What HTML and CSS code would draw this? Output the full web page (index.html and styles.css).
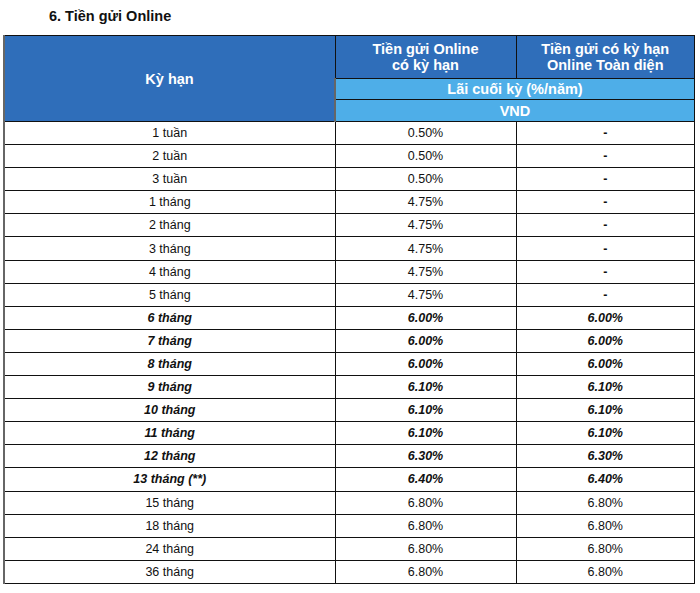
FILE: index.html
```html
<!DOCTYPE html>
<html lang="vi">
<head>
<meta charset="utf-8">
<title>Tiền gửi Online</title>
<link rel="stylesheet" href="styles.css">
</head>
<body>
<h2 class="title">6. Tiền gửi Online</h2>
<table class="rates">
  <colgroup>
    <col class="c1"><col class="c2"><col class="c3">
  </colgroup>
  <thead>
    <tr class="h1">
      <th rowspan="3" class="dark">Kỳ hạn</th>
      <th class="dark">Tiền gửi Online<br>có kỳ hạn</th>
      <th class="dark">Tiền gửi có kỳ hạn<br>Online Toàn diện</th>
    </tr>
    <tr class="h2"><th colspan="2" class="light">Lãi cuối kỳ (%/năm)</th></tr>
    <tr class="h3"><th colspan="2" class="light">VND</th></tr>
  </thead>
  <tbody>
    <tr><td>1 tuần</td><td>0.50%</td><td class="na">-</td></tr>
    <tr><td>2 tuần</td><td>0.50%</td><td class="na">-</td></tr>
    <tr><td>3 tuần</td><td>0.50%</td><td class="na">-</td></tr>
    <tr><td>1 tháng</td><td>4.75%</td><td class="na">-</td></tr>
    <tr><td>2 tháng</td><td>4.75%</td><td class="na">-</td></tr>
    <tr><td>3 tháng</td><td>4.75%</td><td class="na">-</td></tr>
    <tr><td>4 tháng</td><td>4.75%</td><td class="na">-</td></tr>
    <tr><td>5 tháng</td><td>4.75%</td><td class="na">-</td></tr>
    <tr class="em"><td>6 tháng</td><td>6.00%</td><td>6.00%</td></tr>
    <tr class="em"><td>7 tháng</td><td>6.00%</td><td>6.00%</td></tr>
    <tr class="em"><td>8 tháng</td><td>6.00%</td><td>6.00%</td></tr>
    <tr class="em"><td>9 tháng</td><td>6.10%</td><td>6.10%</td></tr>
    <tr class="em"><td>10 tháng</td><td>6.10%</td><td>6.10%</td></tr>
    <tr class="em"><td>11 tháng</td><td>6.10%</td><td>6.10%</td></tr>
    <tr class="em"><td>12 tháng</td><td>6.30%</td><td>6.30%</td></tr>
    <tr class="em"><td>13 tháng (**)</td><td>6.40%</td><td>6.40%</td></tr>
    <tr><td>15 tháng</td><td>6.80%</td><td>6.80%</td></tr>
    <tr><td>18 tháng</td><td>6.80%</td><td>6.80%</td></tr>
    <tr><td>24 tháng</td><td>6.80%</td><td>6.80%</td></tr>
    <tr><td>36 tháng</td><td>6.80%</td><td>6.80%</td></tr>
  </tbody>
</table>
</body>
</html>
```
FILE: styles.css
```css
html, body {
  margin: 0;
  padding: 0;
  background: #ffffff;
}
body {
  font-family: "Liberation Sans", Arial, sans-serif;
  color: #111;
}
.title {
  box-sizing: border-box;
  height: 35px;
  margin: 0;
  padding: 8px 0 0 49px;
  font-size: 14.5px;
  line-height: 17px;
  font-weight: bold;
  color: #111;
}
.rates {
  border-collapse: collapse;
  table-layout: fixed;
  width: 692px;
  margin-left: 3px;
  border-left: 2px solid #666;
}
.c1 { width: 331px; }
.c2 { width: 181px; }
.rates th,
.rates td {
  border: 1px solid #111;
  padding: 0;
  text-align: center;
  vertical-align: middle;
}
.rates th {
  color: #fff;
  font-size: 14.5px;
  font-weight: bold;
  line-height: 16px;
}
.rates th.dark { background: #2f6eba; }
.rates th.light { background: #4eaee8; }
.rates th:first-child { border-left: 2px solid #666; }
.h1 { height: 43px; }
.h2 { height: 21px; }
.h3 { height: 22px; }
.rates td {
  font-size: 12.5px;
  line-height: 14px;
  height: 22.1px;
}
.rates td:first-child { border-left: 2px solid #666; }
.rates td.na { font-weight: bold; }
.rates tr.em td {
  font-weight: bold;
  font-style: italic;
}
```
